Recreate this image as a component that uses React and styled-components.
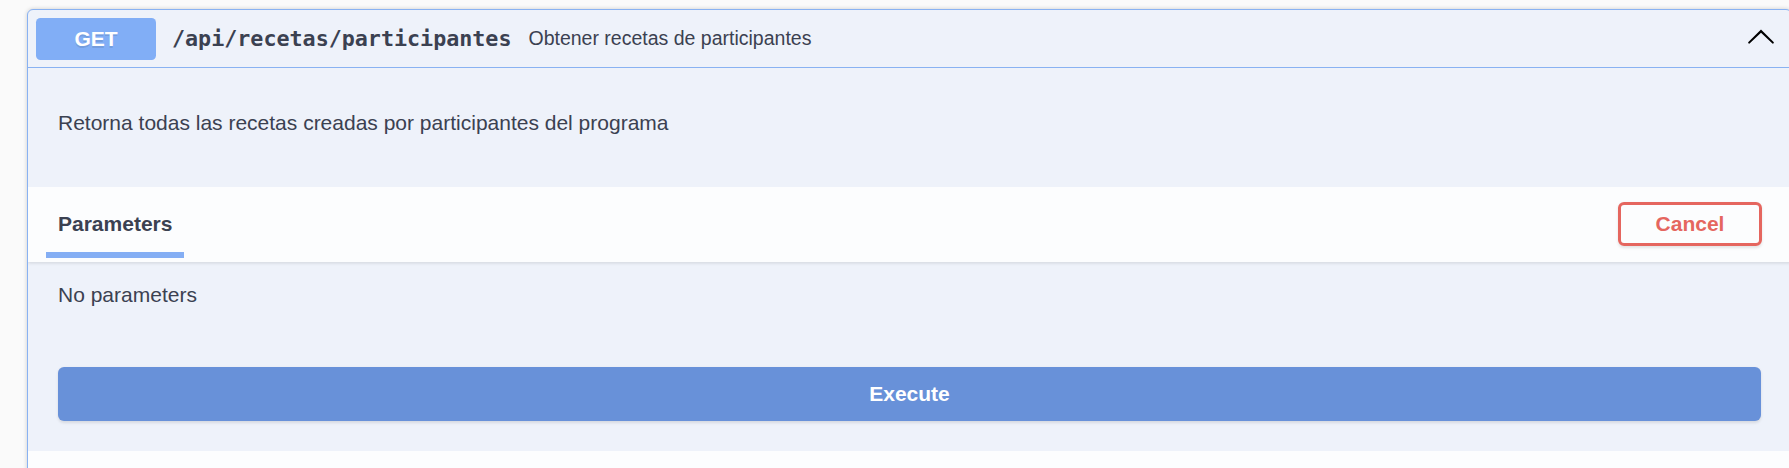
import React, { useState } from 'react';
import styled, { createGlobalStyle } from 'styled-components';

const GlobalStyle = createGlobalStyle`
  html, body {
    margin: 0;
    padding: 0;
    background: #fafafa;
    overflow: hidden;
  }
  body {
    font-family: "Liberation Sans", Arial, sans-serif;
    color: #3b4151;
  }
`;

const Page = styled.div`
  padding-top: 9px;
  padding-left: 27px;
  margin-right: -3px;
`;

const OpBlock = styled.div`
  border: 1px solid #89b2f2;
  border-radius: 6px;
  background: #eef2fa;
  box-shadow: 0 0 4.5px rgba(0, 0, 0, 0.19);
  overflow: hidden;
`;

const Summary = styled.div`
  display: flex;
  align-items: center;
  height: 57px;
  padding: 0 15px 0 8px;
  border-bottom: 1px solid #89b2f2;
`;

const Method = styled.span`
  display: flex;
  align-items: center;
  justify-content: center;
  width: 120px;
  height: 42px;
  border-radius: 4.5px;
  background: #81aef6;
  color: #fff;
  font-weight: 700;
  font-size: 21px;
  text-shadow: 0 1.5px 0 rgba(0, 0, 0, 0.1);
`;

const Path = styled.span`
  margin-left: 16px;
  font-family: "DejaVu Sans Mono", "Liberation Mono", monospace;
  font-weight: 700;
  font-size: 21.7px;
  color: #3b4151;
`;

const SummaryText = styled.span`
  flex: 1;
  margin-left: 17px;
  font-size: 19.5px;
  color: #3b4151;
`;

const Toggle = styled.button`
  display: flex;
  padding: 0;
  margin-bottom: 6px;
  border: 0;
  background: none;
  cursor: pointer;
`;

const Description = styled.div`
  height: 119px;
  padding: 43px 30px 0;
  box-sizing: border-box;
  font-size: 21px;
  line-height: 24px;
`;

const TabHeader = styled.div`
  display: flex;
  align-items: center;
  justify-content: space-between;
  height: 75px;
  box-sizing: border-box;
  padding: 0 29px 2px 30px;
  background: rgba(255, 255, 255, 0.8);
  box-shadow: 0 1.5px 3px rgba(0, 0, 0, 0.1);
  position: relative;
`;

const Tab = styled.h4`
  position: relative;
  margin: 0 0 -2px -12px;
  padding: 0 12px 2px;
  align-self: stretch;
  display: flex;
  align-items: center;
  font-size: 21px;
  font-weight: 700;
  color: #3b4151;

  &::after {
    content: '';
    position: absolute;
    left: 0;
    right: 0;
    bottom: 4px;
    height: 6px;
    background: ${p => (p.$active ? '#84aef4' : 'transparent')};
  }
`;

const CancelButton = styled.button`
  width: 144px;
  height: 44px;
  border: 3px solid #e5665f;
  border-radius: 6px;
  background: transparent;
  box-shadow: 0 1.5px 3px rgba(0, 0, 0, 0.1);
  font-family: "Liberation Sans", Arial, sans-serif;
  font-size: 21px;
  font-weight: 700;
  color: #e5665f;
  cursor: pointer;
`;

const Params = styled.div`
  padding: 21px 30px 30px;
`;

const Empty = styled.p`
  margin: 0;
  font-size: 21px;
  line-height: 24px;
`;

const ExecuteButton = styled.button`
  display: block;
  width: 100%;
  height: 54px;
  margin-top: 60px;
  border: 0;
  border-radius: 6px;
  background: #6891d9;
  box-shadow: 0 1.5px 3px rgba(0, 0, 0, 0.1);
  font-family: "Liberation Sans", Arial, sans-serif;
  font-size: 21px;
  font-weight: 700;
  color: #fff;
  cursor: pointer;
`;

const Responses = styled.div`
  height: 60px;
  background: rgba(255, 255, 255, 0.8);
`;

const Chevron = ({ open }) => (
  <svg width="30" height="30" viewBox="0 0 20 20" style={{ transform: open ? 'none' : 'rotate(180deg)' }}>
    <path
      fill="#000"
      d="M17.418 14.908c.272.268.709.268.979 0s.271-.701 0-.969l-7.908-7.83c-.27-.268-.707-.268-.979 0l-7.908 7.83c-.27.268-.27.701 0 .969.271.268.709.268.979 0L10 7.767l7.418 7.141z"
    />
  </svg>
);

export default function App() {
  const [open, setOpen] = useState(true);

  return (
    <>
      <GlobalStyle />
      <Page>
        <OpBlock>
          <Summary>
            <Method>GET</Method>
            <Path>/api/recetas/participantes</Path>
            <SummaryText>Obtener recetas de participantes</SummaryText>
            <Toggle onClick={() => setOpen(!open)}>
              <Chevron open={open} />
            </Toggle>
          </Summary>
          {open && (
            <>
              <Description>Retorna todas las recetas creadas por participantes del programa</Description>
              <TabHeader>
                <Tab $active>Parameters</Tab>
                <CancelButton>Cancel</CancelButton>
              </TabHeader>
              <Params>
                <Empty>No parameters</Empty>
                <ExecuteButton>Execute</ExecuteButton>
              </Params>
              <Responses />
            </>
          )}
        </OpBlock>
      </Page>
    </>
  );
}
